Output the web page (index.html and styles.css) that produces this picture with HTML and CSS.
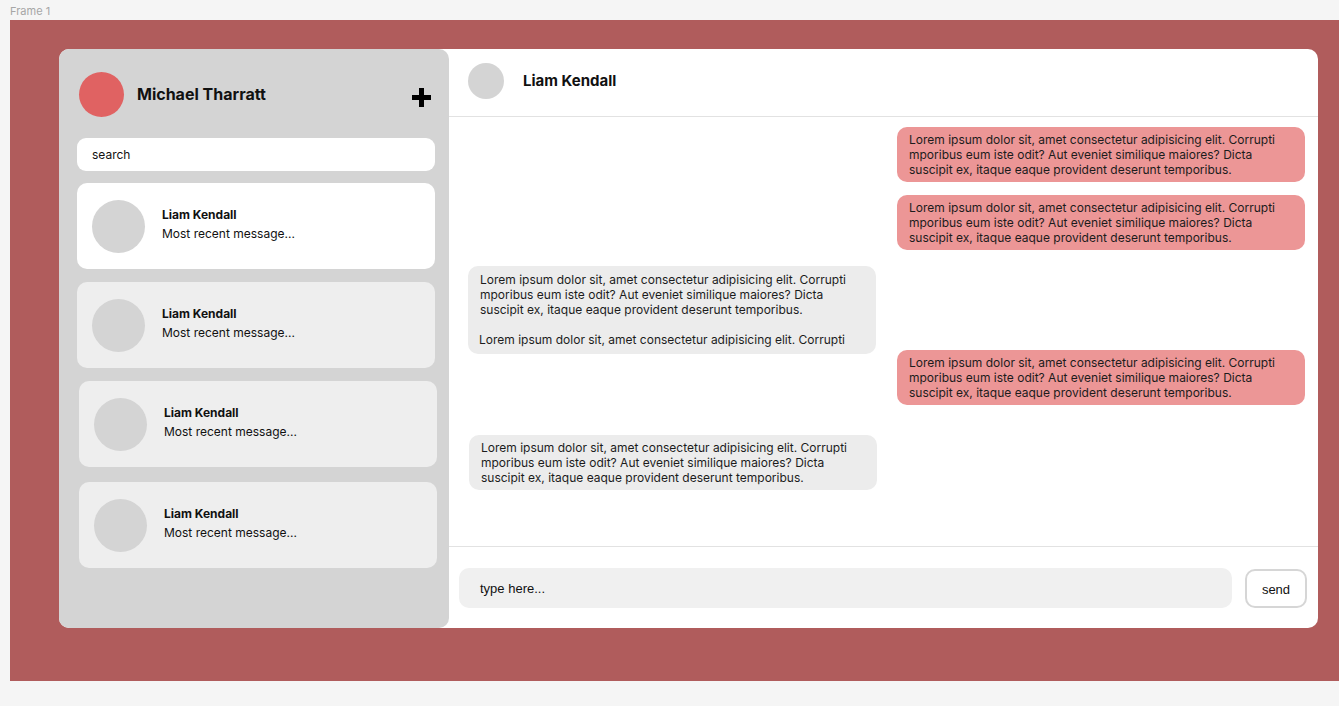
FILE: index.html
```html
<!DOCTYPE html>
<html lang="en">
<head>
<meta charset="utf-8">
<title>Chat</title>
<link rel="stylesheet" href="styles.css">
</head>
<body>
<div class="frame-label">Frame 1</div>
<div class="frame">
  <div class="app">
    <aside class="sidebar">
      <div class="profile">
        <div class="avatar avatar-me"></div>
        <div class="profile-name">Michael Tharratt</div>
        <svg class="plus" width="19" height="19" viewBox="0 0 19 19"><rect x="7" y="0" width="5" height="19" fill="#000"/><rect x="0" y="7" width="19" height="5" fill="#000"/></svg>
      </div>
      <div class="search">search</div>
      <div class="contacts">
        <div class="contact contact-active">
          <div class="avatar avatar-contact"></div>
          <div class="contact-text"><div class="contact-name">Liam Kendall</div><div class="contact-msg">Most recent message...</div></div>
        </div>
        <div class="contact">
          <div class="avatar avatar-contact"></div>
          <div class="contact-text"><div class="contact-name">Liam Kendall</div><div class="contact-msg">Most recent message...</div></div>
        </div>
        <div class="contact contact-shift">
          <div class="avatar avatar-contact"></div>
          <div class="contact-text"><div class="contact-name">Liam Kendall</div><div class="contact-msg">Most recent message...</div></div>
        </div>
        <div class="contact contact-shift contact-last">
          <div class="avatar avatar-contact"></div>
          <div class="contact-text"><div class="contact-name">Liam Kendall</div><div class="contact-msg">Most recent message...</div></div>
        </div>
      </div>
    </aside>
    <main class="chat">
      <header class="chat-header">
        <div class="avatar avatar-header"></div>
        <div class="chat-name">Liam Kendall</div>
      </header>
      <section class="messages">
        <div class="bubble sent m1">Lorem ipsum dolor sit, amet consectetur adipisicing elit. Corrupti mporibus eum iste odit? Aut eveniet similique maiores? Dicta suscipit ex, itaque eaque provident deserunt temporibus.</div>
        <div class="bubble sent m2">Lorem ipsum dolor sit, amet consectetur adipisicing elit. Corrupti mporibus eum iste odit? Aut eveniet similique maiores? Dicta suscipit ex, itaque eaque provident deserunt temporibus.</div>
        <div class="bubble received m3"><p class="para">Lorem ipsum dolor sit, amet consectetur adipisicing elit. Corrupti mporibus eum iste odit? Aut eveniet similique maiores? Dicta suscipit ex, itaque eaque provident deserunt temporibus.</p><p class="para para-2">Lorem ipsum dolor sit, amet consectetur adipisicing elit. Corrupti</p></div>
        <div class="bubble sent m4">Lorem ipsum dolor sit, amet consectetur adipisicing elit. Corrupti mporibus eum iste odit? Aut eveniet similique maiores? Dicta suscipit ex, itaque eaque provident deserunt temporibus.</div>
        <div class="bubble received m5">Lorem ipsum dolor sit, amet consectetur adipisicing elit. Corrupti mporibus eum iste odit? Aut eveniet similique maiores? Dicta suscipit ex, itaque eaque provident deserunt temporibus.</div>
      </section>
      <footer class="composer">
        <div class="input">type here...</div>
        <div class="send">send</div>
      </footer>
    </main>
  </div>
</div>
</body>
</html>
```

FILE: styles.css
```css
* { box-sizing: border-box; }
html, body { margin: 0; padding: 0; }
body {
  background: #f5f5f5;
  font-family: Inter, "Noto Sans", sans-serif;
  color: #111;
  width: 1339px;
  height: 706px;
  overflow: hidden;
}
.frame-label {
  height: 20px;
  padding: 5px 0 0 10px;
  font-size: 11px;
  line-height: 13px;
  color: #a6a6a6;
}
.frame {
  margin-left: 10px;
  width: 1329px;
  height: 661px;
  background: #b05c5c;
  padding: 29px 0 0 49px;
}
.app {
  width: 1259px;
  height: 579px;
  background: #fff;
  border-radius: 10px;
  display: flex;
}
.sidebar {
  width: 390px;
  flex: none;
  height: 100%;
  background: #d4d4d4;
  border-radius: 10px;
  padding: 23px 14px 0 18px;
}
.avatar { border-radius: 50%; flex: none; }
.profile {
  display: flex;
  align-items: center;
  height: 45px;
  padding-left: 2px;
  padding-right: 4px;
}
.avatar-me { width: 45px; height: 45px; background: #e06262; }
.profile-name {
  margin-left: 13px;
  margin-top: -2px;
  font-weight: 700;
  font-size: 16px;
  flex: 1;
}
.plus { flex: none; margin-top: 5px; }
.search {
  margin-top: 21px;
  height: 33px;
  background: #fff;
  border-radius: 9px;
  padding-left: 15px;
  font-size: 12px;
  line-height: 33px;
}
.contacts { margin-top: 12px; display: flex; flex-direction: column; gap: 13px; }
.contact {
  height: 86px;
  background: #eeeeee;
  border-radius: 10px;
  display: flex;
  align-items: center;
  padding-left: 15px;
}
.contact-active { background: #fff; }
.contact-shift { margin-left: 2px; margin-right: -2px; }
.contact-last { margin-top: 2px; }
.avatar-contact { width: 53px; height: 53px; background: #d4d4d4; }
.contact-text { margin-left: 17px; margin-top: -3px; }
.contact-name { font-weight: 700; font-size: 12px; line-height: 16px; }
.contact-msg { font-size: 12px; line-height: 16px; margin-top: 3px; }
.chat {
  flex: 1;
  display: flex;
  flex-direction: column;
  min-width: 0;
}
.chat-header {
  height: 68px;
  border-bottom: 1px solid #e2e2e2;
  display: flex;
  align-items: center;
  padding-left: 19px;
  padding-bottom: 4px;
}
.avatar-header { width: 36px; height: 36px; background: #d4d4d4; }
.chat-name { margin-left: 19px; font-weight: 700; font-size: 15px; }
.messages {
  height: 430px;
  border-bottom: 1px solid #e2e2e2;
  display: flex;
  flex-direction: column;
  padding: 10px 13px 0 19px;
}
.bubble {
  width: 408px;
  font-size: 12px;
  line-height: 15px;
  color: #1c1c1c;
  border-radius: 10px;
  padding: 5px 20px 5px 12px;
}
.sent { background: #ec9696; align-self: flex-end; }
.received { background: #ececec; align-self: flex-start; }
.m2 { margin-top: 13px; }
.m3 { margin-top: 16px; height: 88px; padding-top: 6px; }
.m4 { margin-top: -4px; }
.m5 { margin-top: 30px; margin-left: 1px; }
.para { margin: 0; }
.para-2 { margin-top: 15px; margin-left: -1px; }
.composer {
  flex: 1;
  display: flex;
  align-items: flex-start;
  padding: 21px 11px 0 10px;
  gap: 13px;
}
.input {
  flex: 1;
  height: 40px;
  background: #f0f0f0;
  border-radius: 10px;
  font-family: "Liberation Sans", Arial, sans-serif;
  font-size: 13px;
  line-height: 42px;
  padding-left: 21px;
}
.send {
  width: 62px;
  height: 39px;
  margin-top: 1px;
  border: 2px solid #d6d6d6;
  border-radius: 10px;
  background: #fff;
  font-family: "Liberation Sans", Arial, sans-serif;
  font-size: 13px;
  line-height: 37px;
  text-align: center;
}
```
